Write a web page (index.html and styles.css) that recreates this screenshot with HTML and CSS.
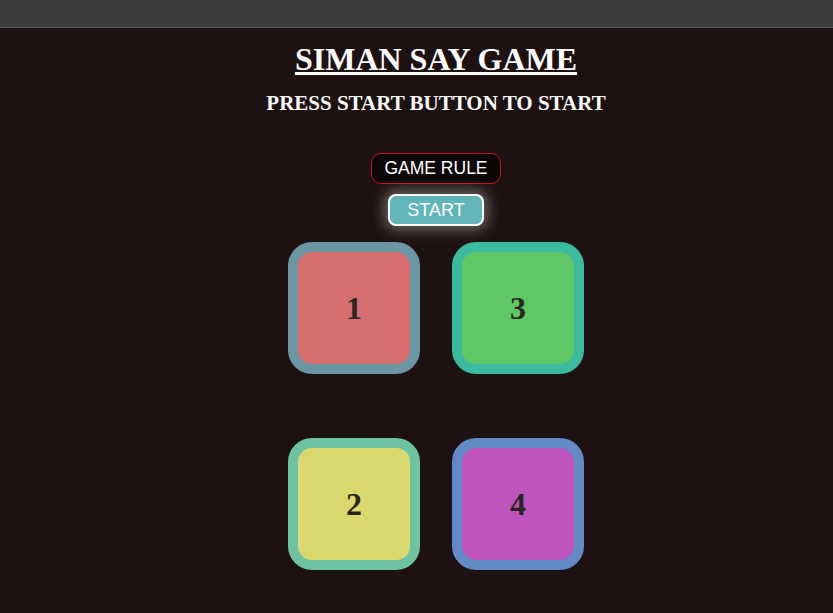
FILE: index.html
```html
<!DOCTYPE html>
<html>
<head>
<meta charset="utf-8">
<link rel="stylesheet" href="styles.css">
</head>
<body>
<div class="topbar"></div>
<main class="page">
  <h1 class="title">SIMAN SAY GAME</h1>
  <h2 class="subtitle">PRESS START BUTTON TO START</h2>
  <div class="controls">
    <button class="rule-btn">GAME RULE</button>
    <button class="start-btn">START</button>
  </div>
  <div class="board">
    <div class="tile red">1</div>
    <div class="tile green">3</div>
    <div class="tile yellow">2</div>
    <div class="tile purple">4</div>
  </div>
</main>
</body>
</html>
```
FILE: styles.css
```css
html, body {
  margin: 0;
  padding: 0;
}
body {
  background: #1e1111;
  font-family: "Liberation Serif", "Times New Roman", serif;
  min-height: 613px;
}
.topbar {
  height: 27px;
  background: #3c3c3c;
  border-bottom: 1px solid #585858;
}
.page {
  display: flex;
  flex-direction: column;
  align-items: center;
  padding-left: 39px;
  color: #fff;
}
.title {
  margin: 13px 0 0;
  font-size: 32px;
  font-weight: bold;
  text-decoration: underline;
  line-height: 37px;
}
.subtitle {
  margin: 13px 0 0;
  font-size: 21px;
  font-weight: bold;
  line-height: 24px;
}
.controls {
  display: flex;
  flex-direction: column;
  align-items: center;
  gap: 10px;
  margin-top: 38px;
}
.rule-btn {
  width: 130px;
  height: 31px;
  background: #0c0707;
  color: #fff;
  border: 1px solid #d10c0c;
  border-radius: 10px;
  font-family: "Liberation Sans", Arial, sans-serif;
  font-size: 17.5px;
  padding: 0;
}
.start-btn {
  width: 96px;
  height: 32px;
  background: #62b5bb;
  color: #fff;
  border: 2px solid #fff;
  border-radius: 8px;
  font-family: "Liberation Sans", Arial, sans-serif;
  font-size: 18px;
  padding: 0;
  box-shadow: 0 0 14px 4px rgba(255, 255, 255, 0.35);
}
.board {
  display: grid;
  grid-template-columns: 132px 132px;
  column-gap: 32px;
  row-gap: 64px;
  margin-top: 16px;
}
.tile {
  box-sizing: border-box;
  width: 132px;
  height: 132px;
  border: 10px solid;
  border-radius: 24px;
  display: flex;
  align-items: center;
  justify-content: center;
  font-size: 32px;
  font-weight: bold;
  color: #2a2424;
}
.red { background: #d76e6e; border-color: #6b96a6; }
.green { background: #5fc864; border-color: #3abba0; }
.yellow { background: #dbd96e; border-color: #6cc4a0; }
.purple { background: #bd55bc; border-color: #628ac6; }
```
